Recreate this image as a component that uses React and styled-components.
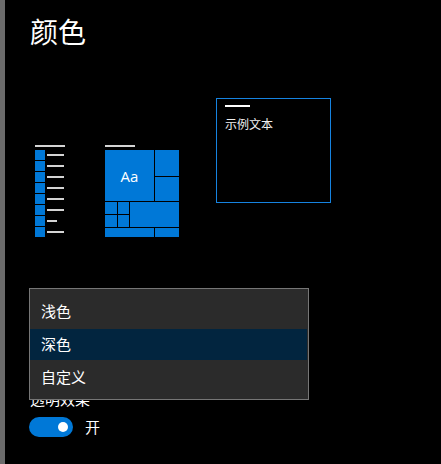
import React from 'react';
import styled, { createGlobalStyle } from 'styled-components';

const GlobalStyle = createGlobalStyle`
  html, body {
    margin: 0;
    padding: 0;
    background: #000;
  }
  body {
    font-family: "Noto Sans CJK SC", "Noto Sans", sans-serif;
    color: #fff;
  }
`;

const Page = styled.div`
  position: relative;
  display: flex;
  width: 441px;
  height: 464px;
  overflow: hidden;
  background: #000;
`;

const SideBar = styled.div`
  width: 5px;
  flex-shrink: 0;
  background: #6b6b6b;
`;

const Content = styled.div`
  flex: 1;
  padding-left: 25px;
  display: flex;
  flex-direction: column;
`;

const Title = styled.h1`
  margin: 14px 0 0;
  font-size: 28px;
  line-height: 34px;
  font-weight: 400;
`;

const PreviewRow = styled.div`
  display: flex;
  align-items: flex-start;
  margin-top: 50px;
`;

const IconBlock = styled.div`
  display: flex;
  flex-direction: column;
  gap: 3px;
  margin-top: 47px;
  margin-left: ${p => p.$offset}px;
`;

const TopLine = styled.div`
  width: 30px;
  height: 2px;
  background: #d4d4d4;
`;

const ListRows = styled.div`
  display: flex;
  flex-direction: column;
  gap: 1px;
`;

const ListRow = styled.div`
  display: flex;
  align-items: center;
  gap: 2px;
  height: 10px;
`;

const ListSquare = styled.div`
  width: 10px;
  height: 10px;
  background: #0078d7;
`;

const ListLine = styled.div`
  width: ${p => p.$width}px;
  height: 2px;
  background: #d4d4d4;
`;

const TileGrid = styled.div`
  display: grid;
  grid-template-columns: 12px 11px 24px 24px;
  grid-template-rows: 26px 24px 12px 12px 9px;
  gap: 1px;
`;

const Tile = styled.div`
  background: #0078d7;
  grid-column: ${p => p.$col};
  grid-row: ${p => p.$row};
  display: flex;
  align-items: center;
  justify-content: center;
  font-family: "Open Sans", "Noto Sans", sans-serif;
  font-size: 15px;
  color: #fff;
`;

const SampleBox = styled.div`
  box-sizing: border-box;
  width: 115px;
  height: 105px;
  margin-left: 37px;
  border: 1px solid #1683e0;
  padding: 6px 8px;
  display: flex;
  flex-direction: column;
`;

const SampleLine = styled.div`
  width: 25px;
  height: 2px;
  background: #fff;
`;

const SampleText = styled.div`
  margin-top: 8px;
  font-size: 12px;
  line-height: 18px;
  color: #f0f0f0;
`;

const Label = styled.div`
  margin-top: 152px;
  font-size: 15px;
  line-height: 20px;
  color: #fff;
`;

const ToggleRow = styled.div`
  display: flex;
  align-items: center;
  margin-top: 8px;
  margin-left: -1px;
`;

const Toggle = styled.div`
  box-sizing: border-box;
  width: 44px;
  height: 20px;
  border-radius: 10px;
  background: #0078d7;
  display: flex;
  align-items: center;
  justify-content: flex-end;
  padding-right: 5px;
`;

const Knob = styled.div`
  width: 10px;
  height: 10px;
  border-radius: 50%;
  background: #fff;
`;

const ToggleText = styled.span`
  margin-left: 12px;
  font-size: 15px;
  line-height: 20px;
`;

const Dropdown = styled.ul`
  position: absolute;
  left: 29px;
  top: 288px;
  box-sizing: border-box;
  width: 280px;
  height: 112px;
  margin: 0;
  padding: 7px 1px 6px 0;
  list-style: none;
  background: #2b2b2b;
  border: 1px solid #767676;
  display: flex;
  flex-direction: column;
  gap: 2px;
`;

const Option = styled.li`
  box-sizing: border-box;
  height: 31px;
  display: flex;
  align-items: center;
  padding: 0 0 2px 11px;
  font-size: 15px;
  color: #fff;
  background: ${p => (p.$selected ? '#02253f' : 'transparent')};
`;

const listLines = [17, 17, 17, 17, 17, 17, 10, 17];

const tiles = [
  { col: '1 / 4', row: '1 / 3', text: 'Aa' },
  { col: '4', row: '1' },
  { col: '4', row: '2' },
  { col: '1', row: '3' },
  { col: '2', row: '3' },
  { col: '1', row: '4' },
  { col: '2', row: '4' },
  { col: '3 / 5', row: '3 / 5' },
  { col: '1 / 4', row: '5' },
  { col: '4', row: '5' }
];

const options = ['浅色', '深色', '自定义'];

const App = () => {
  return (
    <>
      <GlobalStyle />
      <Page>
        <SideBar />
        <Content>
          <Title>颜色</Title>

          <PreviewRow>
            <IconBlock $offset={5}>
              <TopLine />
              <ListRows>
                {listLines.map((w, i) => (
                  <ListRow key={i}>
                    <ListSquare />
                    <ListLine $width={w} />
                  </ListRow>
                ))}
              </ListRows>
            </IconBlock>

            <IconBlock $offset={40}>
              <TopLine />
              <TileGrid>
                {tiles.map((t, i) => (
                  <Tile key={i} $col={t.col} $row={t.row}>
                    {t.text}
                  </Tile>
                ))}
              </TileGrid>
            </IconBlock>

            <SampleBox>
              <SampleLine />
              <SampleText>示例文本</SampleText>
            </SampleBox>
          </PreviewRow>

          <Label>透明效果</Label>
          <ToggleRow>
            <Toggle>
              <Knob />
            </Toggle>
            <ToggleText>开</ToggleText>
          </ToggleRow>
        </Content>

        <Dropdown>
          {options.map(o => (
            <Option key={o} $selected={o === '深色'}>
              {o}
            </Option>
          ))}
        </Dropdown>
      </Page>
    </>
  );
};

export default App;
